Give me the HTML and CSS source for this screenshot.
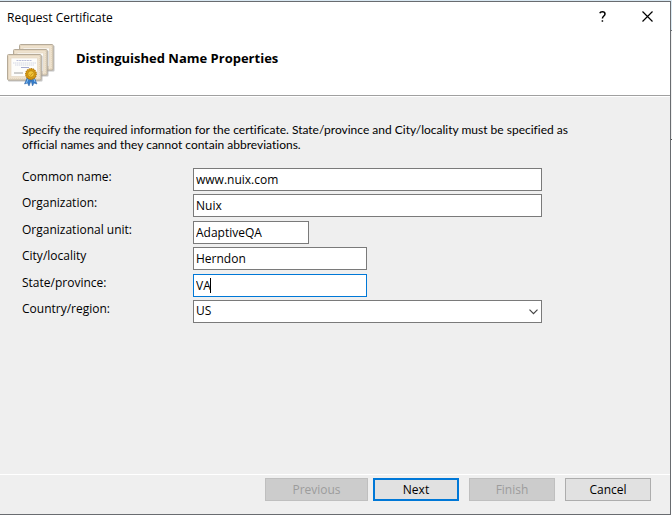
FILE: index.html
```html
<!DOCTYPE html>
<html lang="en">
<head>
<meta charset="utf-8">
<title>Request Certificate</title>
<link rel="stylesheet" href="styles.css">
</head>
<body>
<main class="dialog">
  <header class="titlebar">
    <span class="title">Request Certificate</span>
    <button class="caption-button" type="button" aria-label="Help">
      <svg width="7" height="11" viewBox="0 0 7 11" fill="none" stroke="#000" stroke-width="1.5"><path d="M.8 2.2C1.2 1 2.2.8 3.3.8 5 .8 6 1.700 6 3c0 2-2.600 2-2.600 4.600M3.400 9.200v1.600"/></svg>
    </button>
    <button class="caption-button" type="button" aria-label="Close">
      <svg width="11" height="11" viewBox="0 0 11 11" fill="none" stroke="#000" stroke-width="1.2"><path d="M.5.5l10 10M10.5.5l-10 10"/></svg>
    </button>
  </header>
  <div class="banner">
    <svg class="banner-icon" width="50" height="44" viewBox="0 0 50 44" aria-hidden="true">
      <defs>
        <g id="certificate">
          <rect x="1" y="1.5" width="34.500" height="26" rx="1" fill="#9c9c9c" opacity=".6"/>
          <rect x=".5" y=".5" width="33.500" height="25.500" rx="1" fill="#eee2ce" stroke="#b5aa98"/>
          <rect x="1.500" y="1.500" width="31.500" height="23.500" fill="none" stroke="#dccbb0" stroke-dasharray="1 1"/>
          <rect x="4" y="4" width="26.500" height="18.500" fill="#fdfdfb" stroke="#e3d4bd" stroke-width=".6"/>
        </g>
      </defs>
      <use href="#certificate" x="12" y="0"/>
      <use href="#certificate" x="6" y="5"/>
      <use href="#certificate" x="0" y="10"/>
      <g stroke="#a9add0" stroke-width=".8" fill="none">
        <path d="M9.500 16.500h15" stroke-dasharray="2 .6"/>
        <path d="M6 19h23M8 21h19" stroke="#c8cbe0" stroke-dasharray="1.500 .5"/>
        <path d="M14 23.500h8" stroke="#8e94c6"/>
        <path d="M7 29h9" stroke="#888"/>
      </g>
      <path d="M20.500 33l-3 7 3-1 1.500 3 3-7.500zM27 33l3 7-3-1-1.500 3-2-7.500z" fill="#347bc9" stroke="#285f9e" stroke-width=".5"/>
      <path d="M21 35l-1.500 4M27 35l1 3" stroke="#8ac2f3" stroke-width="1"/>
      <circle cx="24" cy="30" r="5.300" fill="#d99c12" stroke="#b67a09" stroke-width="1.200" stroke-dasharray="1.500 .5"/>
      <circle cx="24" cy="30" r="3.300" fill="#f2c638" stroke="#b57f0b" stroke-width=".8"/>
      <path d="M22.500 30.500l1.200 1 2-2.500" fill="none" stroke="#c48a12" stroke-width=".8"/>
    </svg>
    <h1 class="heading">Distinguished Name Properties</h1>
  </div>
  <form class="content">
    <p class="intro">Specify the required information for the certificate. State/province and City/locality must be specified as<br>official names and they cannot contain abbreviations.</p>
    <div class="fields">
      <label for="common">Common name:</label>
      <input class="field" id="common" type="text" value="www.nuix.com">
      <label for="organization">Organization:</label>
      <input class="field" id="organization" type="text" value="Nuix">
      <label for="unit">Organizational unit:</label>
      <input class="field field-short" id="unit" type="text" value="AdaptiveQA">
      <label for="city">City/locality</label>
      <input class="field field-medium" id="city" type="text" value="Herndon">
      <label for="state">State/province:</label>
      <div class="active-field field-medium">
        <input class="field field-active" id="state" type="text" value="VA">
        <span class="caret"></span>
      </div>
      <label for="country">Country/region:</label>
      <div class="select-box">
        <select class="field" id="country"><option>US</option></select>
        <svg class="chevron" width="9" height="6" viewBox="0 0 9 6" fill="none" stroke="#444" stroke-width="1.200"><path d="M.5.7l4 4 4-4"/></svg>
      </div>
    </div>
  </form>
  <footer class="actions">
    <button class="button button-previous" type="button" disabled>Previous</button>
    <button class="button button-default" type="button">Next</button>
    <button class="button" type="button" disabled>Finish</button>
    <button class="button" type="button">Cancel</button>
  </footer>
</main>
</body>
</html>
```
FILE: styles.css
```css
* {
  box-sizing: border-box;
}

body {
  margin: 0;
  padding: 1px 1px 0 0;
  min-height: 100vh;
  display: flex;
  background: linear-gradient(#d9e8f2 30px, #70757a 30px 31px, #efefef 31px 139px, #555 139px 140px, #fff 140px);
  color: #000;
  font: 12px/15px "Open Sans", "Noto Sans", sans-serif;
}

button,
input,
select {
  font: inherit;
  color: inherit;
}

.dialog {
  flex: 1;
  display: flex;
  flex-direction: column;
  background: #efefef;
  border: solid #696c70;
  border-width: 1px 1px 1px 0;
}

.titlebar {
  display: flex;
  align-items: center;
  height: 30px;
  padding-left: 7px;
  background: #fff;
}

.title {
  flex: 1;
}

.caption-button {
  display: flex;
  align-items: center;
  justify-content: center;
  width: 45px;
  height: 30px;
  padding: 0 1px 2px 0;
  border: 0;
  background: none;
}

.banner {
  display: flex;
  gap: 19px;
  height: 64px;
  padding: 12px 7px 0;
  background: #fff;
  border-bottom: 1px solid #a0a0a0;
}

.heading {
  margin: 5px 0 0;
  font-size: 13px;
  line-height: 18px;
}

.content {
  flex: 1;
  padding: 25px 22px 0;
  border-top: 1px solid #fff;
}

.intro {
  margin: 0 0 16px;
  font-family: Lato, "Open Sans", sans-serif;
  font-variant-ligatures: none;
}

.fields {
  display: grid;
  grid-template-columns: 171px minmax(0, 349px);
  align-content: space-between;
  min-height: 155px;
  line-height: 18px;
}

.field {
  display: block;
  width: 100%;
  height: 23px;
  margin: 0;
  padding: 0 2px;
  border: 1px solid #7a7a7a;
  border-radius: 0;
  background: #fff;
  appearance: none;
}

.field-short {
  width: 116px;
}

.field-medium {
  width: 174px;
}

.field-active {
  border-color: #0078d7;
}

.active-field,
.select-box {
  position: relative;
}

.caret {
  position: absolute;
  top: 4px;
  left: 17px;
  width: 1px;
  height: 15px;
  background: #000;
}

.chevron {
  position: absolute;
  top: 9px;
  right: 4px;
  pointer-events: none;
}

.actions {
  display: flex;
  justify-content: flex-end;
  gap: 10px;
  padding: 3px 19px 13px;
  border-top: 1px solid #fff;
}

.button {
  width: 86px;
  height: 23px;
  padding: 0;
  border: 1px solid #adadad;
  background: #e1e1e1;
}

.button:disabled {
  border-color: #bfbfbf;
  background: #ccc;
  color: #9c9c9c;
}

.button-previous {
  width: 103px;
  margin-right: -5px;
}

.button-default {
  border: 2px solid #0078d7;
}
```
